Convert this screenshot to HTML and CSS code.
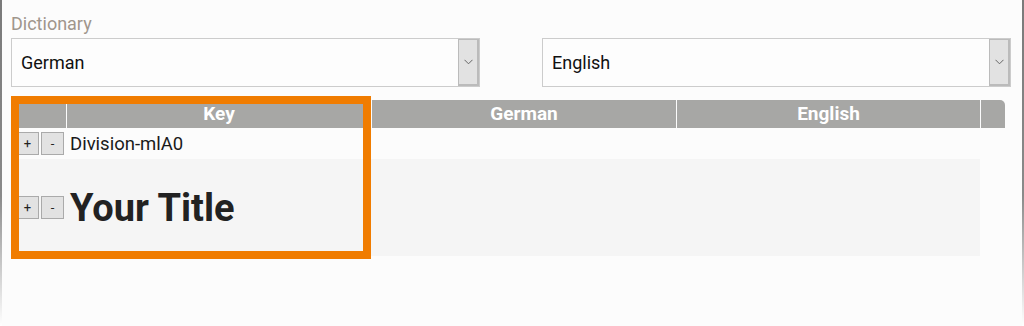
FILE: index.html
```html
<!DOCTYPE html>
<html lang="en">
<head>
    <meta charset="UTF-8">
    <meta name="viewport" content="width=device-width, initial-scale=1.0">
    <title>Dictionary</title>
    <link rel="stylesheet" href="styles.css">
</head>
<body>
    <div class="page">
        <label class="dict-label">Dictionary</label>
        <div class="select-row">
            <div class="select-box">
                <span class="select-value">German</span>
                <span class="select-arrow">
                    <svg width="9" height="6" viewBox="0 0 9 6"><path d="M0.5 0.8 L4.5 4.8 L8.5 0.8" fill="none" stroke="#666" stroke-width="1"/></svg>
                </span>
            </div>
            <div class="select-box">
                <span class="select-value">English</span>
                <span class="select-arrow">
                    <svg width="9" height="6" viewBox="0 0 9 6"><path d="M0.5 0.8 L4.5 4.8 L8.5 0.8" fill="none" stroke="#666" stroke-width="1"/></svg>
                </span>
            </div>
        </div>
        <div class="dict-table">
            <div class="table-head">
                <div class="th"></div>
                <div class="th">Key</div>
                <div class="th">German</div>
                <div class="th">English</div>
                <div class="th th-end"></div>
            </div>
            <div class="tr">
                <div class="td td-actions">
                    <button class="mini-btn">+</button>
                    <button class="mini-btn">-</button>
                </div>
                <div class="td td-key">Division-mlA0</div>
                <div class="td"></div>
                <div class="td"></div>
            </div>
            <div class="tr tr-title">
                <div class="td td-actions">
                    <button class="mini-btn">+</button>
                    <button class="mini-btn">-</button>
                </div>
                <div class="td td-key"><h1 class="title-text">Your Title</h1></div>
                <div class="td"></div>
                <div class="td"></div>
            </div>
            <div class="highlight"></div>
        </div>
    </div>
</body>
</html>
```

FILE: styles.css
```css
html, body {
    margin: 0;
    padding: 0;
}
body {
    font-family: Roboto, 'Liberation Sans', sans-serif;
    background-color: #fcfcfc;
    width: 1024px;
    height: 326px;
    overflow: hidden;
    background-image:
        linear-gradient(to bottom, #7a7a7a, #8a8a8a 60%, #ffffff),
        linear-gradient(to bottom, #7a7a7a, #8a8a8a 60%, #ffffff);
    background-size: 2px 100%, 2px 100%;
    background-position: left top, right top;
    background-repeat: no-repeat;
}
.page {
    padding: 14px 13px 0 11px;
}
.dict-label {
    display: block;
    font-size: 18px;
    line-height: 20px;
    color: #a0968c;
    margin-bottom: 4px;
}
.select-row {
    display: flex;
    justify-content: space-between;
}
.select-box {
    width: 469px;
    height: 49px;
    box-sizing: border-box;
    border: 1px solid #cccccc;
    background-color: #fdfdfd;
    display: flex;
    align-items: stretch;
}
.select-value {
    flex-grow: 1;
    padding-left: 9px;
    font-size: 18px;
    color: #111111;
    display: flex;
    align-items: center;
}
.select-arrow {
    width: 21px;
    box-sizing: border-box;
    background-color: #e2e2e2;
    border: 1px solid #bbbbbb;
    border-right: 2px solid #bbbbbb;
    border-bottom: 2px solid #bbbbbb;
    display: flex;
    align-items: center;
    justify-content: center;
}
.dict-table {
    position: relative;
    margin-top: 13px;
}
.table-head {
    display: grid;
    grid-template-columns: 55px 304px 304px 303px 24px;
    column-gap: 1px;
    height: 28px;
}
.th {
    background-color: #a7a7a5;
    color: #ffffff;
    font-weight: bold;
    font-size: 19px;
    text-align: center;
    line-height: 28px;
}
.th-end {
    border-top-right-radius: 5px;
}
.tr {
    display: grid;
    grid-template-columns: 55px 304px 304px 303px;
    column-gap: 1px;
    width: 969px;
    height: 31px;
}
.tr-title {
    height: 97px;
    background-color: #f5f5f5;
}
.td {
    display: flex;
    align-items: center;
}
.td-actions {
    padding-left: 5px;
    gap: 2px;
}
.td-key {
    padding-left: 3px;
    font-size: 18.5px;
    color: #1a1a1a;
}
.mini-btn {
    width: 23px;
    height: 23px;
    padding: 0;
    box-sizing: border-box;
    border: 1px solid #aaaaaa;
    background-color: #e2e2e2;
    color: #222222;
    font-family: Roboto, 'Liberation Sans', sans-serif;
    font-size: 13px;
    line-height: 20px;
}
.title-text {
    margin: 0;
    font-size: 38px;
    font-weight: bold;
    color: #222222;
}
.highlight {
    position: absolute;
    left: 0;
    top: -4px;
    width: 360px;
    height: 163px;
    box-sizing: border-box;
    border: 8px solid #f07c00;
}
```
